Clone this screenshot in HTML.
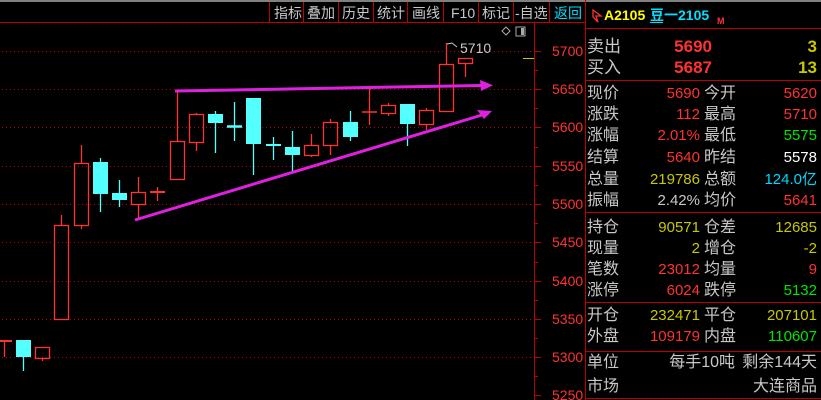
<!DOCTYPE html>
<html><head><meta charset="utf-8"><style>
html,body{margin:0;padding:0;background:#000;width:821px;height:400px;overflow:hidden}
svg{display:block}
text{font-family:"Liberation Sans","Noto Sans CJK SC",sans-serif}
.lb{fill:#c8c8c8;font-size:16px}
.v{font-size:15px;text-anchor:end}
.r{fill:#ff3232}.y{fill:#c8c800}.g{fill:#00e600}.c{fill:#00d8ff}.w{fill:#fff}.gr{fill:#c8c8c8}
.tb{fill:#c8c8c8;font-size:14px}
.ax{fill:#ff3232;font-size:14px}
</style></head><body>
<svg width="821" height="400" viewBox="0 0 821 400">
<rect width="821" height="400" fill="#000"/>
<rect x="0" y="0" width="821" height="2" fill="#808080"/>
<line x1="0" y1="22.5" x2="585" y2="22.5" stroke="#c00000" stroke-width="1"/>
<g stroke="#c00000" stroke-width="1">
<line x1="269.5" y1="2" x2="269.5" y2="22"/><line x1="303.5" y1="2" x2="303.5" y2="22"/>
<line x1="338.5" y1="2" x2="338.5" y2="22"/><line x1="373.5" y1="2" x2="373.5" y2="22"/>
<line x1="407.5" y1="2" x2="407.5" y2="22"/><line x1="443.5" y1="2" x2="443.5" y2="22"/>
<line x1="478.5" y1="2" x2="478.5" y2="22"/><line x1="513.5" y1="2" x2="513.5" y2="22"/>
<line x1="549.5" y1="2" x2="549.5" y2="22"/>
</g>
<g class="tb">
<text x="274" y="18">指标</text><text x="307" y="18">叠加</text><text x="342" y="18">历史</text>
<text x="377" y="18">统计</text><text x="412" y="18">画线</text><text x="451" y="18">F10</text>
<text x="482" y="18">标记</text><text x="515" y="18">-自选</text><text x="554" y="18" style="fill:#00e0ff">返回</text>
</g>
<g stroke="#c00000" stroke-width="1" stroke-dasharray="1 3">
<line x1="2" y1="51.5" x2="534" y2="51.5"/><line x1="2" y1="89.5" x2="534" y2="89.5"/>
<line x1="2" y1="127.5" x2="534" y2="127.5"/><line x1="2" y1="166.5" x2="534" y2="166.5"/>
<line x1="2" y1="204.5" x2="534" y2="204.5"/><line x1="2" y1="242.5" x2="534" y2="242.5"/>
<line x1="2" y1="281.5" x2="534" y2="281.5"/><line x1="2" y1="319.5" x2="534" y2="319.5"/>
<line x1="2" y1="357.5" x2="534" y2="357.5"/>
</g>
<line x1="534.5" y1="23" x2="534.5" y2="400" stroke="#c00000"/>
<g stroke="#c00000">
<line x1="534" y1="51.5" x2="541" y2="51.5"/><line x1="534" y1="70.5" x2="538" y2="70.5"/>
<line x1="534" y1="89.5" x2="541" y2="89.5"/><line x1="534" y1="108.5" x2="538" y2="108.5"/>
<line x1="534" y1="127.5" x2="541" y2="127.5"/><line x1="534" y1="147.5" x2="538" y2="147.5"/>
<line x1="534" y1="166.5" x2="541" y2="166.5"/><line x1="534" y1="185.5" x2="538" y2="185.5"/>
<line x1="534" y1="204.5" x2="541" y2="204.5"/><line x1="534" y1="223.5" x2="538" y2="223.5"/>
<line x1="534" y1="242.5" x2="541" y2="242.5"/><line x1="534" y1="262.5" x2="538" y2="262.5"/>
<line x1="534" y1="281.5" x2="541" y2="281.5"/><line x1="534" y1="300.5" x2="538" y2="300.5"/>
<line x1="534" y1="319.5" x2="541" y2="319.5"/><line x1="534" y1="338.5" x2="538" y2="338.5"/>
<line x1="534" y1="357.5" x2="541" y2="357.5"/><line x1="534" y1="376.5" x2="538" y2="376.5"/>
<line x1="534" y1="395.5" x2="541" y2="395.5"/>
</g>
<g class="ax">
<text x="552" y="56">5700</text><text x="552" y="94">5650</text><text x="552" y="132">5600</text>
<text x="552" y="171">5550</text><text x="552" y="209">5500</text><text x="552" y="247">5450</text>
<text x="552" y="286">5400</text><text x="552" y="324">5350</text><text x="552" y="362">5300</text>
<text x="552" y="400">5250</text>
</g>
<line x1="523" y1="58.5" x2="534" y2="58.5" stroke="#c8c800"/>
<path d="M506 27 L510 31 L506 35 L502 31 Z" fill="none" stroke="#aaa"/>
<rect x="516" y="27" width="9" height="9" fill="none" stroke="#aaa"/><rect x="521" y="28" width="3" height="7" fill="#aaa"/>
<g stroke-width="1.3" fill="none">
<g stroke="#ff3232">
<line x1="0" y1="341" x2="12" y2="341" stroke-width="2"/><line x1="4.5" y1="341" x2="4.5" y2="357"/>
<rect x="35.5" y="347.5" width="14" height="11"/><line x1="42.5" y1="358" x2="42.5" y2="361"/>
<rect x="54.5" y="225.5" width="14" height="94"/><line x1="61.5" y1="215" x2="61.5" y2="225"/>
<rect x="74.5" y="163.5" width="14" height="62"/><line x1="81.5" y1="145" x2="81.5" y2="163"/><line x1="81.5" y1="226" x2="81.5" y2="229"/>
<rect x="131.5" y="192.5" width="14" height="12"/><line x1="138.5" y1="177" x2="138.5" y2="192"/><line x1="138.5" y1="205" x2="138.5" y2="219"/>
<line x1="150" y1="192" x2="165" y2="192" stroke-width="2"/><line x1="157.5" y1="187" x2="157.5" y2="201"/>
<rect x="170.5" y="141.5" width="14" height="38"/><line x1="177.5" y1="91" x2="177.5" y2="141"/>
<rect x="189.5" y="114.5" width="14" height="28"/><line x1="196.5" y1="113" x2="196.5" y2="114"/><line x1="196.5" y1="143" x2="196.5" y2="151"/>
<rect x="304.5" y="145.5" width="14" height="10"/><line x1="311.5" y1="134" x2="311.5" y2="145"/><line x1="311.5" y1="156" x2="311.5" y2="157"/>
<rect x="323.5" y="122.5" width="14" height="23"/><line x1="330.5" y1="119" x2="330.5" y2="122"/><line x1="330.5" y1="146" x2="330.5" y2="155"/>
<line x1="362" y1="112" x2="377" y2="112" stroke-width="1.5"/><line x1="369.5" y1="89" x2="369.5" y2="125"/>
<rect x="381.5" y="105.5" width="14" height="8"/><line x1="388.5" y1="103" x2="388.5" y2="105"/><line x1="388.5" y1="114" x2="388.5" y2="116"/>
<rect x="419.5" y="110.5" width="14" height="14"/><line x1="426.5" y1="108" x2="426.5" y2="110"/><line x1="426.5" y1="125" x2="426.5" y2="130"/>
<rect x="439.5" y="64.5" width="14" height="47"/><line x1="446.5" y1="43" x2="446.5" y2="64"/>
<rect x="458.5" y="58.5" width="14" height="5"/><line x1="465.5" y1="64" x2="465.5" y2="77"/>
</g>
<g stroke="#54ffff">
<line x1="23.5" y1="357" x2="23.5" y2="371"/>
<line x1="100.5" y1="158" x2="100.5" y2="212"/>
<line x1="119.5" y1="180" x2="119.5" y2="207"/>
<line x1="215.5" y1="111" x2="215.5" y2="153"/>
<line x1="227" y1="126.5" x2="242" y2="126.5" stroke-width="2.5"/><line x1="234.5" y1="102" x2="234.5" y2="141"/>
<line x1="253.5" y1="98" x2="253.5" y2="175"/>
<line x1="266" y1="145" x2="281" y2="145" stroke-width="2"/><line x1="273.5" y1="137" x2="273.5" y2="160"/>
<line x1="292.5" y1="131" x2="292.5" y2="171"/>
<line x1="350.5" y1="111" x2="350.5" y2="141"/>
<line x1="407.5" y1="104" x2="407.5" y2="146"/>
</g>
</g>
<g fill="#54ffff">
<rect x="16" y="340" width="15" height="17"/>
<rect x="93" y="162" width="15" height="32"/>
<rect x="112" y="193" width="15" height="7"/>
<rect x="208" y="114" width="15" height="9"/>
<rect x="246" y="98" width="15" height="46"/>
<rect x="285" y="147" width="15" height="8"/>
<rect x="343" y="122" width="15" height="15"/>
<rect x="400" y="104" width="15" height="20"/>
</g>
<path d="M447 44 L452 43 L457 47" fill="none" stroke="#c8c8c8"/>
<text x="460" y="53" class="tb">5710</text>
<g stroke="#e020e0" stroke-width="3" fill="#e020e0">
<line x1="175" y1="91" x2="482" y2="85.5"/>
<line x1="135" y1="220" x2="482" y2="115"/>
</g>
<path d="M480 80 L493 85.3 L481 91 Z" fill="#e020e0"/>
<path d="M477 110 L492 111 L484 119 Z" fill="#e020e0"/>
<line x1="585.5" y1="0" x2="585.5" y2="400" stroke="#c00000"/>
<g stroke="#c00000">
<line x1="585" y1="28.5" x2="821" y2="28.5"/><line x1="585" y1="80.5" x2="821" y2="80.5"/>
<line x1="585" y1="212.5" x2="821" y2="212.5"/><line x1="585" y1="302.5" x2="821" y2="302.5"/>
<line x1="585" y1="351.5" x2="821" y2="351.5"/><line x1="585" y1="398.5" x2="821" y2="398.5"/>
</g>
<path d="M593 10 L601 16 L596 16 L598 22 L593 17 Z" fill="none" stroke="#ff3232" stroke-width="1.3"/>
<text x="604" y="20" style="fill:#ffff00;font-size:14px;font-weight:bold">A2105</text>
<text x="650" y="20" style="fill:#00e0ff;font-size:14px;font-weight:bold">豆一2105</text>
<line x1="650" y1="22.5" x2="663" y2="22.5" stroke="#00e0ff"/>
<text x="717" y="24" style="fill:#ff3232;font-size:9px;font-weight:bold">M</text>
<text x="587" y="52" class="lb" style="font-size:17px">卖出</text>
<text x="587" y="73" class="lb" style="font-size:17px">买入</text>
<text x="712" y="52" class="r" style="font-size:17px;font-weight:bold;text-anchor:end">5690</text>
<text x="712" y="73" class="r" style="font-size:17px;font-weight:bold;text-anchor:end">5687</text>
<text x="817" y="52" class="y" style="font-size:17px;font-weight:bold;text-anchor:end">3</text>
<text x="817" y="73" class="y" style="font-size:17px;font-weight:bold;text-anchor:end">13</text>
<g class="lb">
<text x="587" y="98">现价</text><text x="587" y="119">涨跌</text><text x="587" y="140">涨幅</text>
<text x="587" y="162">结算</text><text x="587" y="184">总量</text><text x="587" y="205">振幅</text>
<text x="587" y="232">持仓</text><text x="587" y="253">现量</text><text x="587" y="274">笔数</text><text x="587" y="295">涨停</text>
<text x="587" y="320">开仓</text><text x="587" y="341">外盘</text>
<text x="587" y="367">单位</text><text x="587" y="391">市场</text>
<text x="704" y="98">今开</text><text x="704" y="119">最高</text><text x="704" y="140">最低</text>
<text x="704" y="162">昨结</text><text x="704" y="184">总额</text><text x="704" y="205">均价</text>
<text x="704" y="232">仓差</text><text x="704" y="253">增仓</text><text x="704" y="274">均量</text><text x="704" y="295">跌停</text>
<text x="704" y="320">平仓</text><text x="704" y="341">内盘</text>
</g>
<g class="v">
<text x="700" y="98" class="r">5690</text><text x="817" y="98" class="r">5620</text>
<text x="700" y="119" class="r">112</text><text x="817" y="119" class="r">5710</text>
<text x="700" y="140" class="r">2.01%</text><text x="817" y="140" class="g">5575</text>
<text x="700" y="162" class="r">5640</text><text x="817" y="162" class="w">5578</text>
<text x="700" y="184" class="y">219786</text><text x="817" y="184" class="c">124.0亿</text>
<text x="700" y="205" class="gr">2.42%</text><text x="817" y="205" class="r">5641</text>
<text x="700" y="232" class="y">90571</text><text x="817" y="232" class="y">12685</text>
<text x="700" y="253" class="y">2</text><text x="817" y="253" class="y">-2</text>
<text x="700" y="274" class="r">23012</text><text x="817" y="274" class="r">9</text>
<text x="700" y="295" class="r">6024</text><text x="817" y="295" class="g">5132</text>
<text x="700" y="320" class="y">232471</text><text x="817" y="320" class="y">207101</text>
<text x="700" y="341" class="r">109179</text><text x="817" y="341" class="g">110607</text>
</g>
<text x="735" y="367" class="lb" style="text-anchor:end">每手10吨</text>
<text x="817" y="367" class="lb" style="text-anchor:end">剩余144天</text>
<text x="817" y="391" class="lb" style="text-anchor:end">大连商品</text>
</svg>
</body></html>
